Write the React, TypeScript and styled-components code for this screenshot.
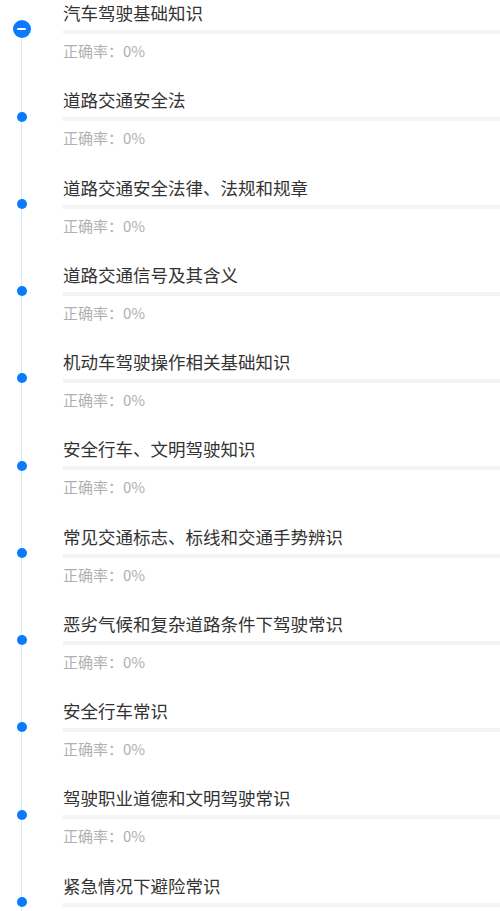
import styled, { createGlobalStyle } from "styled-components";

interface Chapter {
  id: number;
  title: string;
  rate: number;
}

const chapters: Chapter[] = [
  { id: 1, title: "汽车驾驶基础知识", rate: 0 },
  { id: 2, title: "道路交通安全法", rate: 0 },
  { id: 3, title: "道路交通安全法律、法规和规章", rate: 0 },
  { id: 4, title: "道路交通信号及其含义", rate: 0 },
  { id: 5, title: "机动车驾驶操作相关基础知识", rate: 0 },
  { id: 6, title: "安全行车、文明驾驶知识", rate: 0 },
  { id: 7, title: "常见交通标志、标线和交通手势辨识", rate: 0 },
  { id: 8, title: "恶劣气候和复杂道路条件下驾驶常识", rate: 0 },
  { id: 9, title: "安全行车常识", rate: 0 },
  { id: 10, title: "驾驶职业道德和文明驾驶常识", rate: 0 },
  { id: 11, title: "紧急情况下避险常识", rate: 0 },
];

const GlobalStyle = createGlobalStyle`
  html, body {
    margin: 0;
    padding: 0;
    background: #ffffff;
    font-family: "Noto Sans CJK SC", "Noto Sans", sans-serif;
  }
`;

const List = styled.div`
  display: flex;
  flex-direction: column;
  overflow: hidden;
`;

const Item = styled.div`
  display: flex;
  height: 87.28px;
`;

const Rail = styled.div`
  width: 43px;
  flex-shrink: 0;
  display: flex;
  flex-direction: column;
  align-items: center;
  margin-right: 20px;
`;

const Segment = styled.div<{ $hidden?: boolean; $height?: number }>`
  width: 1px;
  background: ${(p) => (p.$hidden ? "transparent" : "#d8e7fb")};
  ${(p) => (p.$height !== undefined ? `height: ${p.$height}px;` : "flex: 1;")}
`;

const Dot = styled.div<{ $open?: boolean }>`
  flex-shrink: 0;
  width: ${(p) => (p.$open ? 18 : 10)}px;
  height: ${(p) => (p.$open ? 18 : 10)}px;
  border-radius: 50%;
  background: #0a7bff;
  display: flex;
  align-items: center;
  justify-content: center;
`;

const Minus = styled.span`
  width: 9px;
  height: 2px;
  border-radius: 1px;
  background: #ffffff;
`;

const Body = styled.div`
  flex: 1;
  display: flex;
  flex-direction: column;
  min-width: 0;
`;

const Title = styled.div`
  font-size: 17.5px;
  line-height: 25px;
  color: #333333;
  white-space: nowrap;
`;

const Bar = styled.div`
  margin-top: 5px;
  height: 4px;
  background: #f3f3f3;
`;

const Rate = styled.div`
  margin-top: 7px;
  font-size: 15px;
  line-height: 20px;
  color: #b0b0b0;
`;

const App = () => {
  return (
    <>
      <GlobalStyle />
      <List>
        {chapters.map((chapter, index) => {
          const open = index === 0;
          return (
            <Item key={chapter.id}>
              <Rail>
                <Segment $hidden={open} $height={open ? 20.3 : 24.3} />
                <Dot $open={open}>{open && <Minus />}</Dot>
                <Segment />
              </Rail>
              <Body>
                <Title>{chapter.title}</Title>
                <Bar />
                <Rate>正确率：{chapter.rate}%</Rate>
              </Body>
            </Item>
          );
        })}
      </List>
    </>
  );
};

export default App;
